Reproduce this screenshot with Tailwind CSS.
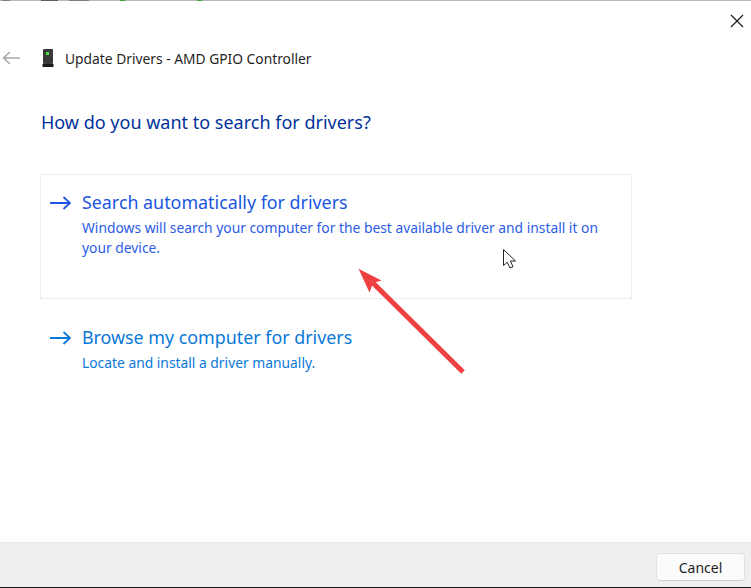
<!DOCTYPE html>
<html lang="en">
<head>
<meta charset="UTF-8">
<title>Update Drivers</title>
<script src="https://cdn.jsdelivr.net/npm/@tailwindcss/browser@4"></script>
</head>
<body class="bg-white">
<div class="relative w-[751px] h-[588px] overflow-hidden flex flex-col bg-white font-['Noto_Sans',sans-serif]">
  <!-- top edge -->
  <div class="h-[1px] shrink-0 bg-[#b8b8b8] flex">
    <div class="ml-[2px] w-[8px] bg-[#808080]"></div>
    <div class="ml-[31px] w-[17px] bg-[#5a5f6a]"></div>
    <div class="ml-[11px] w-[20px] bg-[#808080]"></div>
    <div class="ml-[31px] w-[5px] bg-[#3aa53a]"></div>
    <div class="ml-[72px] w-[5px] bg-[#3aa53a]"></div>
  </div>

  <!-- close -->
  <div class="h-[31px] shrink-0 flex justify-end items-start pt-[13px] pr-[7px]">
    <svg width="14" height="14" viewBox="0 0 14 14" fill="none" stroke="#1a1a1a" stroke-width="1.2"><path d="M1 1L13 13M13 1L1 13"/></svg>
  </div>

  <!-- title row -->
  <div class="h-[52px] shrink-0 flex items-center pl-[2px]">
    <svg width="18" height="14" viewBox="0 0 18 14" fill="none" stroke="#a9a9a9" stroke-width="1.6"><path d="M18 7H1.5M8 1L1.5 7L8 13"/></svg>
    <svg class="ml-[22px]" width="12" height="18" viewBox="0 0 12 18"><rect x="1" y="0" width="10" height="15" rx="1" fill="#3a3a3a"/><rect x="0.5" y="15" width="11" height="3" fill="#1c1c1c"/><rect x="4" y="3" width="3" height="3" fill="#3fe03f"/></svg>
    <span class="ml-[11px] mt-[2px] text-[13.8px] text-[#1f1f1f]">Update Drivers - AMD GPIO Controller</span>
  </div>

  <div class="pl-[40px] flex flex-col">
    <h1 class="mt-[23px] pl-[1px] text-[18px] leading-[30px] text-[#003399]">How do you want to search for drivers?</h1>

    <!-- option 1 -->
    <div class="mt-[37px] w-[592px] h-[125px] border border-[#ececec] flex pl-[9px] pt-[15px]">
      <svg class="mt-[6px] shrink-0" width="21" height="14" viewBox="0 0 21 14" fill="none" stroke="#1f55e0" stroke-width="1.8"><path d="M0 7H20M13.5 1L20 7L13.5 13"/></svg>
      <div class="ml-[11px] w-[530px]">
        <div class="text-[17.85px] leading-[25px] text-[#1a56e0]">Search automatically for drivers</div>
        <div class="mt-[3px] text-[13.84px] leading-[20px] text-[#2b5ce6]">Windows will search your computer for the best available driver and install it on your device.</div>
      </div>
    </div>

    <!-- option 2 -->
    <div class="flex pl-[10px] pt-[26px]">
      <svg class="mt-[6px] shrink-0" width="21" height="14" viewBox="0 0 21 14" fill="none" stroke="#0a78d7" stroke-width="1.8"><path d="M0 7H20M13.5 1L20 7L13.5 13"/></svg>
      <div class="ml-[11px]">
        <div class="text-[17.85px] leading-[25px] text-[#0a78d7]">Browse my computer for drivers</div>
        <div class="mt-[3px] text-[13.84px] leading-[20px] text-[#0a78d7]">Locate and install a driver manually.</div>
      </div>
    </div>
  </div>

  <!-- footer -->
  <div class="mt-auto h-[45px] shrink-0 bg-[#efefef] border-t border-[#e6e6e6] flex justify-end items-start pt-[10px] pr-[6px]">
    <button class="w-[89px] h-[28px] bg-[#fbfbfb] border border-[#e2e2e2] border-b-[#cfcfcf] rounded-[4px] text-[14px] text-[#1f1f1f]">Cancel</button>
  </div>
  <div class="h-[1px] shrink-0 bg-[#1a1a1a]"></div>

  <!-- red annotation arrow -->
  <svg class="absolute left-[355px] top-[265px]" width="115" height="115" viewBox="0 0 115 115" fill="none">
    <path d="M108 107L18 18" stroke="#ef4040" stroke-width="5"/>
    <path d="M3.5 3.8L26.5 15.5L18 18L14.5 27.5Z" fill="#ef4040"/>
  </svg>

  <!-- mouse cursor -->
  <svg class="absolute left-[503px] top-[249px]" width="14" height="20" viewBox="0 0 14 20"><path d="M0.5 0.5V16.5L4.3 13.3L7 19L10 17.7L7.4 12H12.5Z" fill="#fff" stroke="#222" stroke-width="1"/></svg>
</div>
</body>
</html>
